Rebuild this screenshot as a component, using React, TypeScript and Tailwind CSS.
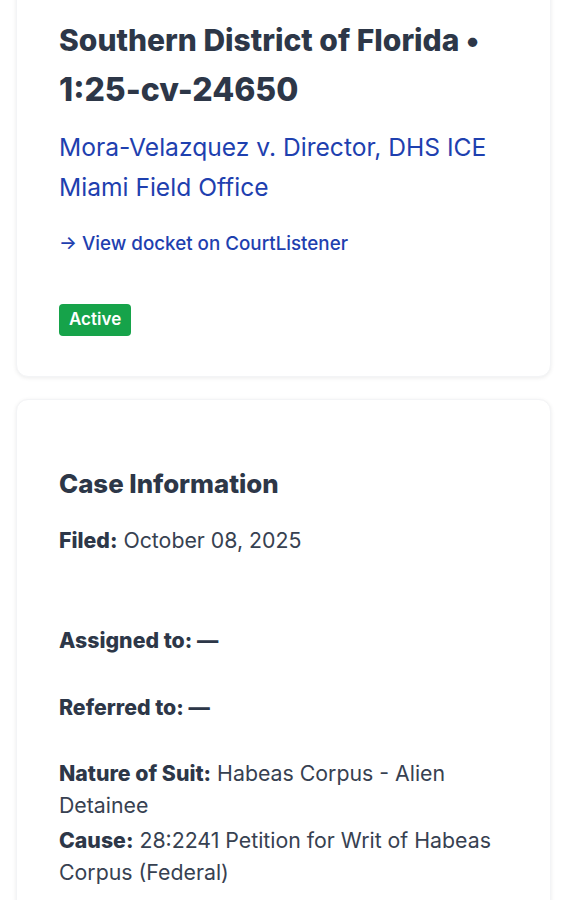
import React from "react";

export default function App() {
  return (
    <div
      className="min-h-[900px] bg-white px-4 overflow-hidden"
      style={{ fontFamily: "Inter, 'Noto Sans', sans-serif" }}
    >
      <div className="-mt-[24px] rounded-xl border border-gray-100 bg-white pl-[42px] pr-6 pt-[38px] pb-[40px] shadow-[0_1px_4px_rgba(0,0,0,0.08)]">
        <h1 className="text-[30px] font-extrabold leading-[50px] text-[#2d3748]">
          Southern District of Florida • <span className="text-[32px]">1:25-cv-24650</span>
        </h1>
        <p className="mt-[12px] text-[24.6px] leading-[40px] text-[#1e40af]">
          Mora-Velazquez v. Director, DHS ICE Miami Field Office
        </p>
        <p className="mt-[23px] text-[18.8px] font-medium leading-[28px] text-[#1e40af]">
          → View docket on CourtListener
        </p>
        <div className="mt-[46px] flex">
          <span className="inline-flex h-[32px] items-center rounded-[4px] bg-[#16a34a] px-[10px] text-[17px] font-semibold text-white">
            Active
          </span>
        </div>
      </div>

      <div className="mt-[22px] rounded-xl border border-gray-100 bg-white pl-[42px] pr-6 pt-[68px] pb-10 shadow-[0_1px_4px_rgba(0,0,0,0.08)] text-[21.3px] leading-[32px] text-[#374151]">
        <h2 className="text-[25.8px] font-extrabold leading-[32px] text-[#2d3748]">
          Case Information
        </h2>
        <p className="mt-[24px]">
          <span className="font-extrabold text-[#2d3748]">Filed:</span> October 08, 2025
        </p>
        <p className="mt-[68px] font-extrabold text-[#2d3748]">Assigned to: —</p>
        <p className="mt-[35px] font-extrabold text-[#2d3748]">Referred to: —</p>
        <p className="mt-[34px]">
          <span className="font-extrabold text-[#2d3748]">Nature of Suit:</span> Habeas Corpus - Alien Detainee
        </p>
        <p className="mt-[3px]">
          <span className="font-extrabold text-[#2d3748]">Cause:</span> 28:2241 Petition for Writ of Habeas Corpus (Federal)
        </p>
      </div>
    </div>
  );
}
